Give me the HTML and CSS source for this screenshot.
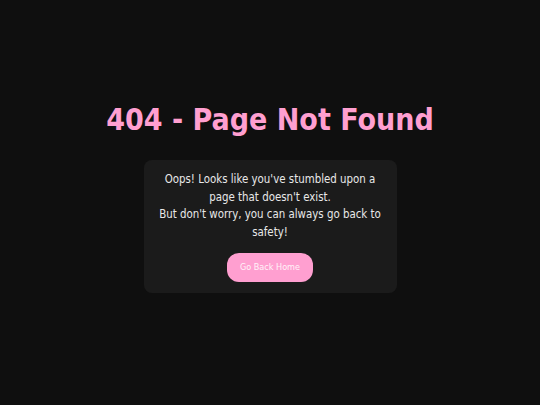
FILE: index.html
```html
<!DOCTYPE html>
<html>
<head>
<meta charset="utf-8">
<link rel="stylesheet" href="styles.css">
</head>
<body>
<main class="page">
  <h1 class="title">404 - Page Not Found</h1>
  <div class="card">
    <p class="message">Oops! Looks like you've stumbled upon a page that doesn't exist.<br>But don't worry, you can always go back to safety!</p>
    <a class="btn" href="#">Go Back Home</a>
  </div>
</main>
</body>
</html>
```
FILE: styles.css
```css
html, body {
  margin: 0;
  padding: 0;
  height: 100%;
}
body {
  background: #0f0f0f;
  font-family: "DejaVu Sans Condensed", "DejaVu Sans", sans-serif;
  font-stretch: condensed;
  color: #e6e6e6;
}
.page {
  height: 100%;
  box-sizing: border-box;
  padding-bottom: 10px;
  display: flex;
  flex-direction: column;
  align-items: center;
  justify-content: center;
}
.title {
  margin: 0 0 22px;
  font-size: 30px;
  font-weight: bold;
  color: #ff9fd0;
  line-height: 36px;
}
.card {
  width: 253px;
  box-sizing: border-box;
  background: #1b1b1b;
  border-radius: 8px;
  padding: 11px 14px 11px;
  display: flex;
  flex-direction: column;
  align-items: center;
  text-align: center;
}
.message {
  margin: 0 0 12px;
  font-size: 11.4px;
  line-height: 17.5px;
  color: #e8e8e8;
}
.btn {
  display: block;
  width: 86px;
  height: 29px;
  line-height: 29px;
  border-radius: 12px;
  background: #ff9fd0;
  color: #fff3f9;
  font-size: 9px;
  text-decoration: none;
}
```
